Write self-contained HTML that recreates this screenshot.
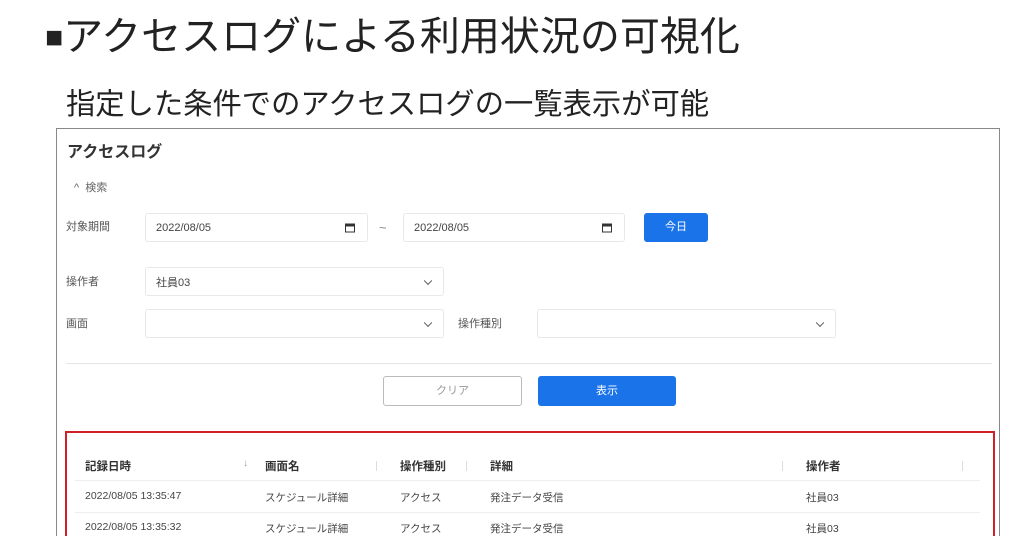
<!DOCTYPE html>
<html><head><meta charset="utf-8"><style>
*{margin:0;padding:0;box-sizing:border-box}
html,body{width:1030px;height:536px;overflow:hidden}
body{background:#fff;position:relative;font-family:"Liberation Sans","Noto Sans CJK JP",sans-serif;color:#333}
.a{position:absolute;white-space:nowrap}
.inp{position:absolute;border:1px solid #e8e8e8;border-radius:3px;background:#fff;font-size:11px;color:#444;padding-left:10px;display:flex;align-items:center}
.lbl{position:absolute;font-size:11px;color:#555}
.chev{position:absolute;right:12px;top:50%;width:6px;height:6px;border-right:1.5px solid #555;border-bottom:1.5px solid #555;transform:translateY(-70%) rotate(45deg)}
.cal{position:absolute;right:12px;top:50%;width:10px;height:9px;border:1.5px solid #333;border-top-width:3px;transform:translateY(-50%)}
.th{position:absolute;font-size:11.5px;font-weight:bold;color:#333}
.td{position:absolute;font-size:10.5px;color:#444}
.sep{position:absolute;width:1px;height:10px;background:#ddd}
</style></head><body>
<div class="a" style="left:45px;top:14px;font-size:40px;color:#222;line-height:46px"><span style="font-size:30px;vertical-align:3px">■</span>アクセスログによる利用状況の可視化</div>
<div class="a" style="left:66px;top:88px;font-size:29.3px;color:#222;line-height:34px">指定した条件でのアクセスログの一覧表示が可能</div>

<div class="a" style="left:56px;top:128px;width:944px;height:420px;border:1.5px solid #888;border-bottom:none"></div>
<div class="a" style="left:67px;top:138px;font-size:16px;font-weight:bold;color:#333">アクセスログ</div>
<div class="a" style="left:74px;top:179px;font-size:11px;color:#666">^&nbsp;&nbsp;検索</div>

<div class="lbl" style="left:66px;top:218px">対象期間</div>
<div class="inp" style="left:145px;top:213px;width:223px;height:29px">2022/08/05<span class="cal"></span></div>
<div class="a" style="left:379px;top:220px;font-size:13px;color:#888">~</div>
<div class="inp" style="left:403px;top:213px;width:222px;height:29px">2022/08/05<span class="cal"></span></div>
<div class="a" style="left:644px;top:213px;width:64px;height:29px;background:#1a73e8;border-radius:3px;color:#fff;font-size:11px;text-align:center;line-height:29px">今日</div>

<div class="lbl" style="left:66px;top:273px">操作者</div>
<div class="inp" style="left:145px;top:267px;width:299px;height:29px">社員03<span class="chev"></span></div>
<div class="lbl" style="left:66px;top:315px">画面</div>
<div class="inp" style="left:145px;top:309px;width:299px;height:29px"><span class="chev"></span></div>
<div class="lbl" style="left:458px;top:315px">操作種別</div>
<div class="inp" style="left:537px;top:309px;width:299px;height:29px"><span class="chev"></span></div>

<div class="a" style="left:66px;top:363px;width:926px;height:1px;background:#e6e6e6"></div>
<div class="a" style="left:383px;top:376px;width:139px;height:30px;border:1px solid #bbb;border-radius:3px;color:#999;font-size:11px;text-align:center;line-height:28px">クリア</div>
<div class="a" style="left:538px;top:376px;width:138px;height:30px;background:#1a73e8;border-radius:3px;color:#fff;font-size:11px;text-align:center;line-height:30px">表示</div>

<div class="a" style="left:65px;top:431px;width:930px;height:120px;border:2px solid #d0202a;border-bottom:none"></div>
<div class="th" style="left:85px;top:458px">記録日時</div>
<div class="a" style="left:243px;top:458px;font-size:10px;color:#999">↓</div>
<div class="th" style="left:265px;top:458px">画面名</div>
<div class="sep" style="left:376px;top:461px"></div>
<div class="th" style="left:400px;top:458px">操作種別</div>
<div class="sep" style="left:466px;top:461px"></div>
<div class="th" style="left:490px;top:458px">詳細</div>
<div class="sep" style="left:782px;top:461px"></div>
<div class="th" style="left:806px;top:458px">操作者</div>
<div class="sep" style="left:962px;top:461px"></div>
<div class="a" style="left:75px;top:480px;width:905px;height:1px;background:#eee"></div>
<div class="td" style="left:85px;top:490px">2022/08/05 13:35:47</div>
<div class="td" style="left:265px;top:490px">スケジュール詳細</div>
<div class="td" style="left:400px;top:490px">アクセス</div>
<div class="td" style="left:490px;top:490px">発注データ受信</div>
<div class="td" style="left:806px;top:490px">社員03</div>
<div class="a" style="left:75px;top:512px;width:905px;height:1px;background:#eee"></div>
<div class="td" style="left:85px;top:521px">2022/08/05 13:35:32</div>
<div class="td" style="left:265px;top:521px">スケジュール詳細</div>
<div class="td" style="left:400px;top:521px">アクセス</div>
<div class="td" style="left:490px;top:521px">発注データ受信</div>
<div class="td" style="left:806px;top:521px">社員03</div>
</body></html>
